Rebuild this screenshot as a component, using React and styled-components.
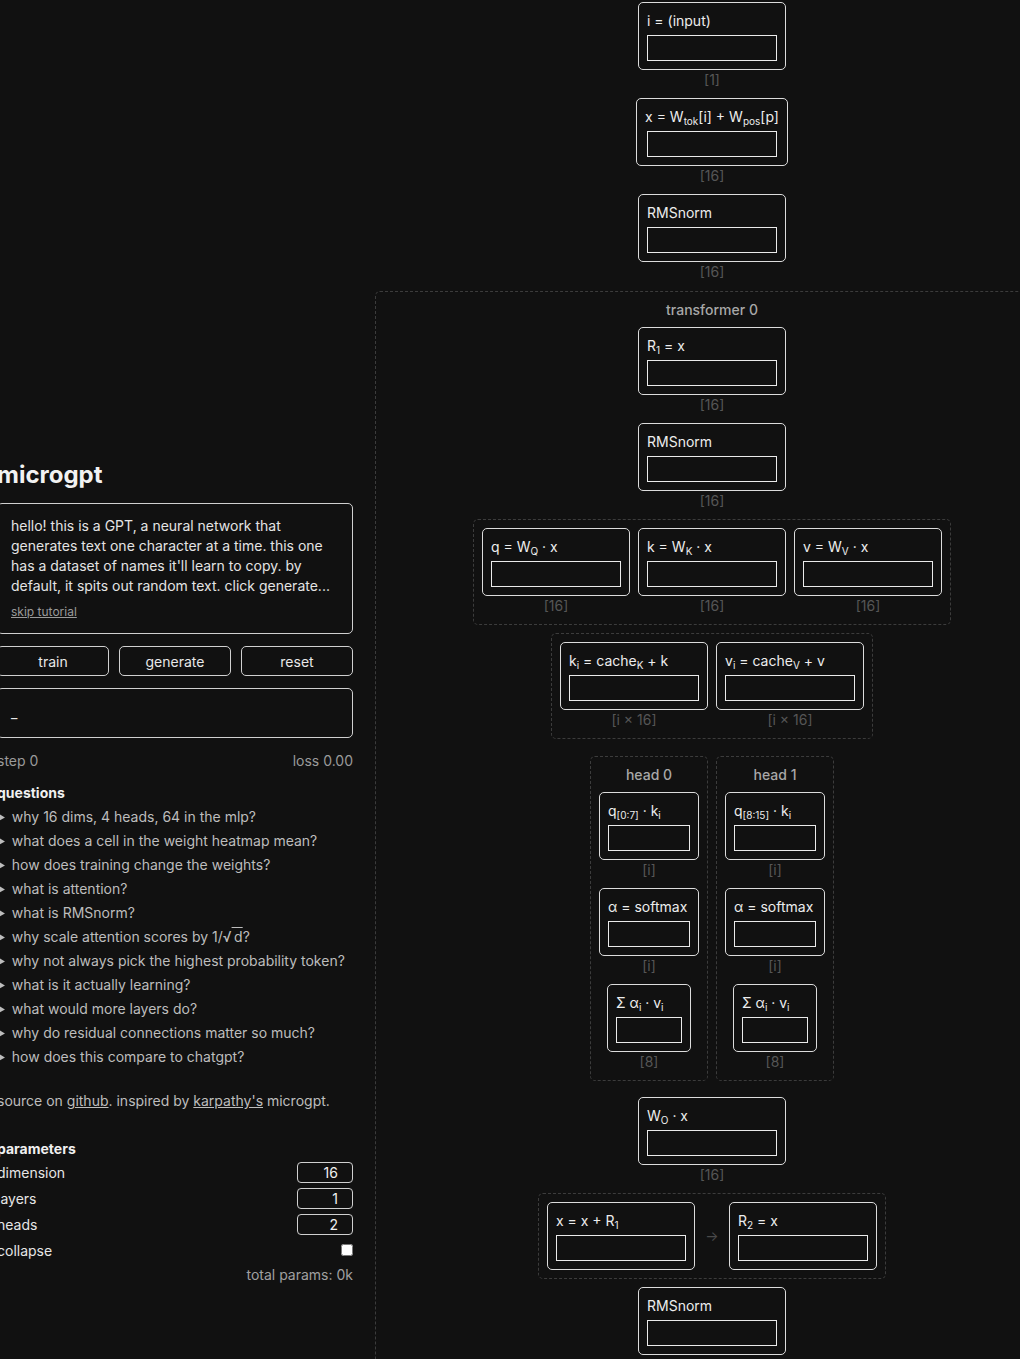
import React from "react";
import styled, { createGlobalStyle } from "styled-components";

const Global = createGlobalStyle`
  html, body { margin: 0; padding: 0; background: #111111; overflow: hidden; }
  body {
    font-family: Inter, "Noto Sans", "DejaVu Sans", sans-serif;
    color: #e6e6e6;
    font-size: 14px;
  }
  * { box-sizing: border-box; }
`;

const Page = styled.div`
  display: flex;
  align-items: flex-start;
  height: 100vh;
  overflow: hidden;
`;

/* ---------- left side panel ---------- */
const Side = styled.aside`
  flex: 0 0 356px;
  margin-left: -3px;
  padding-top: 460px;
  display: flex;
  flex-direction: column;
`;

const Title = styled.h1`
  margin: 0 0 13px;
  font-size: 24px;
  line-height: 30px;
  font-weight: 700;
  color: #f2f2f2;
`;

const Tutorial = styled.div`
  border: 1px solid #d0d0d0;
  border-radius: 5px;
  padding: 12px 13px 13px;
  line-height: 20px;
  color: #e4e4e4;
`;

const TutorialText = styled.p`
  margin: 0;
`;

const Skip = styled.a`
  display: block;
  margin-top: 8px;
  font-size: 12px;
  line-height: 16px;
  color: #9a9a9a;
  text-decoration: underline;
`;

const Buttons = styled.div`
  display: grid;
  grid-template-columns: repeat(3, 1fr);
  gap: 10px;
  margin-top: 12px;
`;

const Button = styled.button`
  height: 30px;
  background: transparent;
  border: 1px solid #d0d0d0;
  border-radius: 5px;
  color: #e8e8e8;
  font: inherit;
  font-size: 14px;
`;

const Output = styled.div`
  margin-top: 12px;
  height: 50px;
  border: 1px solid #d0d0d0;
  border-radius: 5px;
  padding: 14px 13px;
  line-height: 20px;
  color: #e8e8e8;
`;

const Stats = styled.div`
  display: flex;
  justify-content: space-between;
  margin-top: 13px;
  line-height: 20px;
  color: #9a9a9a;
`;

const SectionHead = styled.div`
  margin-top: ${(p) => p.$mt}px;
  font-weight: 700;
  line-height: 20px;
  color: #f0f0f0;
`;

const QList = styled.div`
  margin-top: 2px;
  display: flex;
  flex-direction: column;
`;

const Summary = styled.summary`
  line-height: 24px;
  color: #bdbdbd;
  cursor: pointer;
`;

const Radicand = styled.span`
  text-decoration: overline;
`;

const Source = styled.p`
  margin: 22px 0 0;
  line-height: 20px;
  color: #bdbdbd;
`;

const Link = styled.a`
  color: inherit;
  text-decoration: underline;
`;

const ParamRows = styled.div`
  margin-top: 2px;
  display: flex;
  flex-direction: column;
  gap: 4px;
`;

const ParamRow = styled.div`
  display: flex;
  justify-content: space-between;
  align-items: center;
  height: 22px;
  color: #e6e6e6;
`;

const NumInput = styled.input`
  width: 56px;
  height: 21px;
  background: #111111;
  border: 1px solid #d0d0d0;
  border-radius: 4px;
  color: #f0f0f0;
  font: inherit;
  font-size: 14px;
  text-align: right;
  padding: 0 14px 0 6px;
`;

const Check = styled.input`
  width: 12px;
  height: 12px;
  margin: 0;
`;

const Total = styled.div`
  margin-top: 4px;
  text-align: right;
  line-height: 20px;
  color: #a0a0a0;
`;

/* ---------- diagram ---------- */
const Diagram = styled.main`
  flex: 0 0 674px;
  margin-left: 22px;
  padding-top: 2px;
  display: flex;
  flex-direction: column;
  align-items: center;
  gap: 8px;
`;

const NodeWrap = styled.div`
  display: flex;
  flex-direction: column;
  align-items: center;
`;

const Box = styled.div`
  display: flex;
  flex-direction: column;
  align-items: center;
  gap: 4px;
  padding: 8px;
  border: 1px solid #dcdcdc;
  border-radius: 5px;
`;

const Label = styled.div`
  align-self: stretch;
  line-height: 20px;
  white-space: nowrap;
  color: #ededed;
`;

const Strip = styled.div`
  width: ${(p) => p.$w}px;
  height: 26px;
  border: 1px solid #eaeaea;
`;

const Dim = styled.div`
  line-height: 20px;
  color: #565656;
`;

const Sub = styled.sub`
  font-size: 10px;
  line-height: 0;
  vertical-align: -3px;
`;

const Group = styled.div`
  display: flex;
  flex-direction: ${(p) => (p.$col ? "column" : "row")};
  align-items: ${(p) => (p.$col ? "center" : "flex-start")};
  gap: 8px;
  padding: 8px;
  border: 1px dashed #3c3c3c;
  border-radius: 5px;
`;

const Transformer = styled(Group)`
  align-self: stretch;
  margin-top: 1px;
  padding-bottom: 400px;
`;

const RowGroup = styled(Group)`
  align-items: center;
`;

const GroupTitle = styled.div`
  line-height: 19px;
  font-weight: 500;
  color: #a8a8a8;
`;

const HeadsWrap = styled.div`
  display: flex;
  gap: 8px;
  padding: 8px 0 7px;
  border: 1px solid transparent;
`;

const Arrow = styled.span`
  width: 18px;
  text-align: center;
  color: #4a4a4a;
  line-height: 20px;
`;

function Node({ label, dim, w = 130 }) {
  return (
    <NodeWrap>
      <Box>
        <Label>{label}</Label>
        <Strip $w={w} />
      </Box>
      {dim && <Dim>{dim}</Dim>}
    </NodeWrap>
  );
}

const questions = [
  "why 16 dims, 4 heads, 64 in the mlp?",
  "what does a cell in the weight heatmap mean?",
  "how does training change the weights?",
  "what is attention?",
  "what is RMSnorm?",
  null,
  "why not always pick the highest probability token?",
  "what is it actually learning?",
  "what would more layers do?",
  "why do residual connections matter so much?",
  "how does this compare to chatgpt?",
];

function Head({ n, slice }) {
  return (
    <Group $col>
      <GroupTitle>head {n}</GroupTitle>
      <Node
        w={82}
        dim="[i]"
        label={
          <>
            q<Sub>{slice}</Sub> · k<Sub>i</Sub>
          </>
        }
      />
      <Node w={82} dim="[i]" label="α = softmax" />
      <Node
        w={66}
        dim="[8]"
        label={
          <>
            Σ α<Sub>i</Sub> · v<Sub>i</Sub>
          </>
        }
      />
    </Group>
  );
}

export default function App() {
  return (
    <>
      <Global />
      <Page>
        <Side>
          <Title>microgpt</Title>
          <Tutorial>
            <TutorialText>
              hello! this is a GPT, a neural network that generates text one
              character at a time. this one has a dataset of names it'll learn
              to copy. by default, it spits out random text. click generate...
            </TutorialText>
            <Skip href="#">skip tutorial</Skip>
          </Tutorial>
          <Buttons>
            <Button>train</Button>
            <Button>generate</Button>
            <Button>reset</Button>
          </Buttons>
          <Output>_</Output>
          <Stats>
            <span>step 0</span>
            <span>loss 0.00</span>
          </Stats>
          <SectionHead $mt={12}>questions</SectionHead>
          <QList>
            {questions.map((q, i) => (
              <details key={i}>
                <Summary>
                  {q === null ? (
                    <>
                      why scale attention scores by 1/√<Radicand>&#8201;d</Radicand>?
                    </>
                  ) : (
                    q
                  )}
                </Summary>
              </details>
            ))}
          </QList>
          <Source>
            source on <Link href="#">github</Link>. inspired by{" "}
            <Link href="#">karpathy's</Link> microgpt.
          </Source>
          <SectionHead $mt={28}>parameters</SectionHead>
          <ParamRows>
            <ParamRow>
              <span>dimension</span>
              <NumInput readOnly value="16" />
            </ParamRow>
            <ParamRow>
              <span>layers</span>
              <NumInput readOnly value="1" />
            </ParamRow>
            <ParamRow>
              <span>heads</span>
              <NumInput readOnly value="2" />
            </ParamRow>
            <ParamRow>
              <span>collapse</span>
              <Check type="checkbox" />
            </ParamRow>
          </ParamRows>
          <Total>total params: 0k</Total>
        </Side>

        <Diagram>
          <Node label="i = (input)" dim="[1]" />
          <Node
            dim="[16]"
            label={
              <>
                x = W<Sub>tok</Sub>[i] + W<Sub>pos</Sub>[p]
              </>
            }
          />
          <Node label="RMSnorm" dim="[16]" />
          <Transformer $col>
            <GroupTitle>transformer 0</GroupTitle>
            <Node
              dim="[16]"
              label={
                <>
                  R<Sub>1</Sub> = x
                </>
              }
            />
            <Node label="RMSnorm" dim="[16]" />
            <Group>
              <Node
                dim="[16]"
                label={
                  <>
                    q = W<Sub>Q</Sub> · x
                  </>
                }
              />
              <Node
                dim="[16]"
                label={
                  <>
                    k = W<Sub>K</Sub> · x
                  </>
                }
              />
              <Node
                dim="[16]"
                label={
                  <>
                    v = W<Sub>V</Sub> · x
                  </>
                }
              />
            </Group>
            <Group>
              <Node
                dim="[i × 16]"
                label={
                  <>
                    k<Sub>i</Sub> = cache<Sub>K</Sub> + k
                  </>
                }
              />
              <Node
                dim="[i × 16]"
                label={
                  <>
                    v<Sub>i</Sub> = cache<Sub>V</Sub> + v
                  </>
                }
              />
            </Group>
            <HeadsWrap>
              <Head n={0} slice="[0:7]" />
              <Head n={1} slice="[8:15]" />
            </HeadsWrap>
            <Node
              dim="[16]"
              label={
                <>
                  W<Sub>O</Sub> · x
                </>
              }
            />
            <RowGroup>
              <Node
                label={
                  <>
                    x = x + R<Sub>1</Sub>
                  </>
                }
              />
              <Arrow>→</Arrow>
              <Node
                label={
                  <>
                    R<Sub>2</Sub> = x
                  </>
                }
              />
            </RowGroup>
            <Node label="RMSnorm" dim="[16]" />
            <Node
              dim="[64]"
              label={
                <>
                  h = W<Sub>1</Sub> · x
                </>
              }
            />
            <Node label="ReLU" dim="[64]" />
          </Transformer>
        </Diagram>
      </Page>
    </>
  );
}
